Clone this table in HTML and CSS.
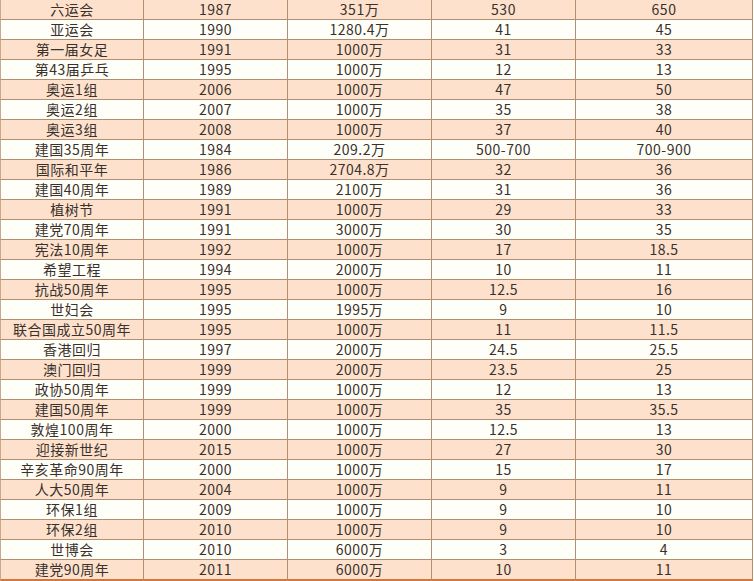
FILE: index.html
```html
<!DOCTYPE html>
<html lang="zh-CN">
<head>
<meta charset="utf-8">
<title>纪念邮票发行量</title>
<link rel="stylesheet" href="styles.css">
</head>
<body>
<table class="stats">
<colgroup>
<col class="c1"><col class="c2"><col class="c3"><col class="c4"><col class="c5">
</colgroup>
<tbody>
<tr><td>六运会</td><td>1987</td><td>351万</td><td>530</td><td>650</td></tr>
<tr><td>亚运会</td><td>1990</td><td>1280.4万</td><td>41</td><td>45</td></tr>
<tr><td>第一届女足</td><td>1991</td><td>1000万</td><td>31</td><td>33</td></tr>
<tr><td>第43届乒乓</td><td>1995</td><td>1000万</td><td>12</td><td>13</td></tr>
<tr><td>奥运1组</td><td>2006</td><td>1000万</td><td>47</td><td>50</td></tr>
<tr><td>奥运2组</td><td>2007</td><td>1000万</td><td>35</td><td>38</td></tr>
<tr><td>奥运3组</td><td>2008</td><td>1000万</td><td>37</td><td>40</td></tr>
<tr><td>建国35周年</td><td>1984</td><td>209.2万</td><td>500-700</td><td>700-900</td></tr>
<tr><td>国际和平年</td><td>1986</td><td>2704.8万</td><td>32</td><td>36</td></tr>
<tr><td>建国40周年</td><td>1989</td><td>2100万</td><td>31</td><td>36</td></tr>
<tr><td>植树节</td><td>1991</td><td>1000万</td><td>29</td><td>33</td></tr>
<tr><td>建党70周年</td><td>1991</td><td>3000万</td><td>30</td><td>35</td></tr>
<tr><td>宪法10周年</td><td>1992</td><td>1000万</td><td>17</td><td>18.5</td></tr>
<tr><td>希望工程</td><td>1994</td><td>2000万</td><td>10</td><td>11</td></tr>
<tr><td>抗战50周年</td><td>1995</td><td>1000万</td><td>12.5</td><td>16</td></tr>
<tr><td>世妇会</td><td>1995</td><td>1995万</td><td>9</td><td>10</td></tr>
<tr><td>联合国成立50周年</td><td>1995</td><td>1000万</td><td>11</td><td>11.5</td></tr>
<tr><td>香港回归</td><td>1997</td><td>2000万</td><td>24.5</td><td>25.5</td></tr>
<tr><td>澳门回归</td><td>1999</td><td>2000万</td><td>23.5</td><td>25</td></tr>
<tr><td>政协50周年</td><td>1999</td><td>1000万</td><td>12</td><td>13</td></tr>
<tr><td>建国50周年</td><td>1999</td><td>1000万</td><td>35</td><td>35.5</td></tr>
<tr><td>敦煌100周年</td><td>2000</td><td>1000万</td><td>12.5</td><td>13</td></tr>
<tr><td>迎接新世纪</td><td>2015</td><td>1000万</td><td>27</td><td>30</td></tr>
<tr><td>辛亥革命90周年</td><td>2000</td><td>1000万</td><td>15</td><td>17</td></tr>
<tr><td>人大50周年</td><td>2004</td><td>1000万</td><td>9</td><td>11</td></tr>
<tr><td>环保1组</td><td>2009</td><td>1000万</td><td>9</td><td>10</td></tr>
<tr><td>环保2组</td><td>2010</td><td>1000万</td><td>9</td><td>10</td></tr>
<tr><td>世博会</td><td>2010</td><td>6000万</td><td>3</td><td>4</td></tr>
<tr><td>建党90周年</td><td>2011</td><td>6000万</td><td>10</td><td>11</td></tr>
</tbody>
</table>
</body>
</html>
```
FILE: styles.css
```css
html, body {
  margin: 0;
  padding: 0;
  background: #ffffff;
}

.stats {
  border-collapse: separate;
  border-spacing: 0;
  table-layout: fixed;
  width: 753px;
  font-family: "Noto Sans CJK SC", "Liberation Sans", sans-serif;
  font-size: 14px;
  letter-spacing: 0.5px;
  color: #3a312b;
}

.c1 { width: 144px; }
.c2 { width: 144px; }
.c3 { width: 144px; }
.c4 { width: 144px; }
.c5 { width: 177px; }

.stats td {
  box-sizing: border-box;
  height: 20px;
  padding: 0;
  line-height: 19px;
  text-align: center;
  white-space: nowrap;
  overflow: hidden;
  border-right: 1px solid #b38f72;
  border-bottom: 1px solid #b38f72;
}

.stats td:first-child {
  border-left: 1px solid #c9a88e;
}

.stats tr:nth-child(odd) td {
  background: #fde1cd;
}

.stats tr:nth-child(even) td {
  background: #fffffa;
}

.stats tr:last-child td {
  border-bottom: 2px solid #d4773f;
  height: 21px;
}
```
